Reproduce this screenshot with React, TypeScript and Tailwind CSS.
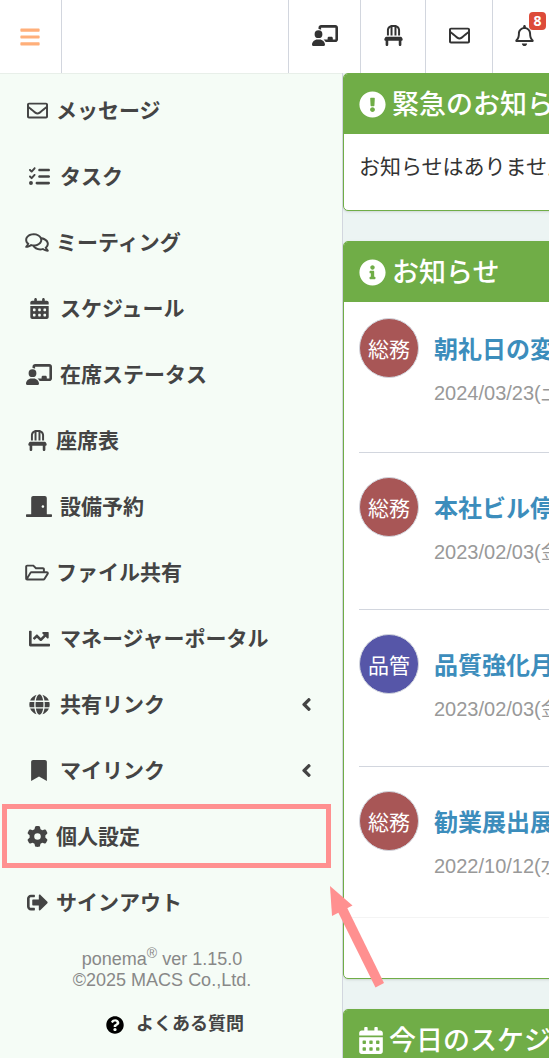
import type { ReactNode } from "react"
import type { IconType } from "react-icons"
import {
  FaAngleLeft,
  FaBars,
  FaBookmark,
  FaCalendarAlt,
  FaChartLine,
  FaDoorClosed,
  FaExclamationCircle,
  FaGlobe,
  FaInfoCircle,
  FaQuestionCircle,
  FaRegBell,
  FaRegComments,
  FaRegEnvelope,
  FaRegFolderOpen,
  FaSignOutAlt,
} from "react-icons/fa"
import { FaCalendarDays, FaChair, FaChalkboardUser, FaGear, FaListCheck } from "react-icons/fa6"
import clsx from "clsx"

interface MenuItem {
  label: string
  icon: IconType
  iconWidth: string
  wide?: boolean
  expandable?: boolean
  highlighted?: boolean
}

const menuItems: MenuItem[] = [
  { label: "メッセージ", icon: FaRegEnvelope, iconWidth: "w-[21px]" },
  { label: "タスク", icon: FaListCheck, iconWidth: "w-[21px]", wide: true },
  { label: "ミーティング", icon: FaRegComments, iconWidth: "w-6" },
  { label: "スケジュール", icon: FaCalendarDays, iconWidth: "w-[19px]", wide: true },
  { label: "在席ステータス", icon: FaChalkboardUser, iconWidth: "w-[26px]", wide: true },
  { label: "座席表", icon: FaChair, iconWidth: "w-[19px]" },
  { label: "設備予約", icon: FaDoorClosed, iconWidth: "w-[26px]", wide: true },
  { label: "ファイル共有", icon: FaRegFolderOpen, iconWidth: "w-6" },
  { label: "マネージャーポータル", icon: FaChartLine, iconWidth: "w-[21px]", wide: true },
  { label: "共有リンク", icon: FaGlobe, iconWidth: "w-[21px]", wide: true, expandable: true },
  { label: "マイリンク", icon: FaBookmark, iconWidth: "w-4", wide: true, expandable: true },
  { label: "個人設定", icon: FaGear, iconWidth: "w-[21px]", highlighted: true },
  { label: "サインアウト", icon: FaSignOutAlt, iconWidth: "w-[21px]" },
]

const notices = [
  { category: "総務", color: "bg-[#a85656]", title: "朝礼日の変更", date: "2024/03/23(土)" },
  { category: "総務", color: "bg-[#a85656]", title: "本社ビル停電", date: "2023/02/03(金)" },
  { category: "品管", color: "bg-[#5656a8]", title: "品質強化月間", date: "2023/02/03(金)" },
  { category: "総務", color: "bg-[#a85656]", title: "勧業展出展", date: "2022/10/12(水)" },
]

function HeaderButton({ label, className, children }: { label: string; className: string; children: ReactNode }) {
  return (
    <button
      type="button"
      aria-label={label}
      className={clsx("flex shrink-0 items-center justify-center border-l border-[#d2d6de] pb-0.5 text-[#333]", className)}
    >
      {children}
    </button>
  )
}

function Header() {
  return (
    <header className="relative z-20 flex h-[73px] shrink-0 bg-white">
      <button
        type="button"
        aria-label="メニュー"
        className="flex w-[62px] shrink-0 items-center justify-center border-r border-[#d2d6de] pr-0.5 text-[#ffaf7a]"
      >
        <FaBars className="h-[22px] w-5" />
      </button>
      <div className="ml-auto flex">
        <HeaderButton label="在席ステータス" className="w-[72px]">
          <FaChalkboardUser className="h-[21px] w-[26px]" />
        </HeaderButton>
        <HeaderButton label="座席表" className="w-[65px]">
          <FaChair className="h-[21px] w-[19px]" />
        </HeaderButton>
        <HeaderButton label="メッセージ" className="w-[67px]">
          <FaRegEnvelope className="size-[21px]" />
        </HeaderButton>
        <HeaderButton label="通知" className="relative w-[57px] pl-1.5">
          <FaRegBell className="h-[21px] w-[19px]" />
          <span className="absolute top-3 right-[3px] flex h-[18px] w-[17px] items-center justify-center rounded-[4px] bg-[#dd4b39] font-['Noto_Sans','Noto_Sans_CJK_JP',sans-serif] text-[14px] leading-none font-bold text-white">
            8
          </span>
        </HeaderButton>
      </div>
    </header>
  )
}

function SidebarItem({ item }: { item: MenuItem }) {
  const Icon = item.icon
  return (
    <li className="relative">
      <a href="#" className="flex h-[66px] items-center gap-[7px] pr-[29px] pl-[25px] text-[21px] font-bold">
        <span className={clsx("flex shrink-0 justify-center", item.wide ? "w-7" : "w-6")}>
          <Icon className={clsx("h-[21px] shrink-0", item.iconWidth)} />
        </span>
        <span className="pt-0.5">{item.label}</span>
        {item.expandable && <FaAngleLeft className="ml-auto h-[21px] w-[13px]" />}
      </a>
      {item.highlighted && (
        <>
          <div className="pointer-events-none absolute inset-y-px right-[11px] left-0.5 border-5 border-[#ff9090]" />
          <svg
            className="pointer-events-none absolute top-[83px] left-[330px] h-[102px] w-14 text-[#ff9090]"
            viewBox="0 0 56 102"
            fill="currentColor"
          >
            <path d="M0 0L22.5 19.5L2 30Z" />
            <path d="M8 26L17 21.5L54 97L45.5 101.500Z" />
          </svg>
        </>
      )}
    </li>
  )
}

function Sidebar() {
  return (
    <aside className="relative z-10 w-[343px] shrink-0 border-r border-[#d2d6de] bg-[#f5fcf6] pt-1 text-[#444] inset-shadow-2xs">
      <nav>
        <ul>
          {menuItems.map((item) => (
            <SidebarItem key={item.label} item={item} />
          ))}
        </ul>
      </nav>
      <p className="mt-3.5 pr-[18px] text-center text-[18px] leading-[21px] text-[#888]">
        ponema<sup className="text-[14px]">®</sup> ver 1.15.0
        <br />
        ©2025 MACS Co.,Ltd.
      </p>
      <a href="#" className="mt-5 flex items-center justify-center gap-3 pl-2 text-[18px] font-bold">
        <FaQuestionCircle className="size-[18px] text-black" />
        よくある質問
      </a>
    </aside>
  )
}

interface PanelProps {
  title: string
  icon: IconType
  iconWidth: string
  children?: ReactNode
}

function Panel({ title, icon: Icon, iconWidth, children }: PanelProps) {
  return (
    <section className="min-w-[360px] shrink-0 overflow-hidden rounded-[5px] border border-[#70ad47] bg-white shadow-sm">
      <h2 className="flex h-[60px] items-center gap-1.5 bg-[#70ad47] px-[15px] text-[27px] font-medium text-white">
        <Icon className={clsx("h-[27px] shrink-0", iconWidth)} />
        <span className="pt-0.5">{title}</span>
      </h2>
      {children}
    </section>
  )
}

export default function App() {
  return (
    <div className="flex h-screen flex-col overflow-hidden bg-[#ecf4f3] font-['Liberation_Sans','Noto_Sans_CJK_JP',sans-serif] text-[#333]">
      <Header />
      <div className="flex min-h-0 flex-1">
        <Sidebar />
        <main className="flex min-w-0 flex-1 flex-col gap-[30px] overflow-hidden whitespace-nowrap">
          <Panel title="緊急のお知らせ" icon={FaExclamationCircle} iconWidth="w-[27px]">
            <p className="h-[76px] px-[15px] pt-[17px] text-[21px] leading-8">お知らせはありません。</p>
          </Panel>
          <Panel title="お知らせ" icon={FaInfoCircle} iconWidth="w-[27px]">
            <ul className="px-[15px]">
              {notices.map((notice, i) => (
                <li
                  key={i}
                  className="flex h-[157px] gap-[15px] border-b border-[#d2d6de] pt-6 first:h-[151px] first:pt-4 last:h-[150px] last:border-0"
                >
                  <span
                    className={clsx(
                      "flex size-[60px] shrink-0 items-center justify-center rounded-full border border-[#d2d6de] pt-1 text-[21px] text-white",
                      notice.color,
                    )}
                  >
                    {notice.category}
                  </span>
                  <div className="pt-3.5">
                    <a href="#" className="block text-[24px] leading-9 font-bold text-[#3c8dbc]">
                      {notice.title}
                    </a>
                    <p className="mt-[11px] text-[20px] leading-7 text-[#999]">{notice.date}</p>
                  </div>
                </li>
              ))}
            </ul>
            <div className="h-[61px] border-t border-[#f4f4f4]" />
          </Panel>
          <Panel title="今日のスケジュール" icon={FaCalendarAlt} iconWidth="w-6" />
        </main>
      </div>
    </div>
  )
}
